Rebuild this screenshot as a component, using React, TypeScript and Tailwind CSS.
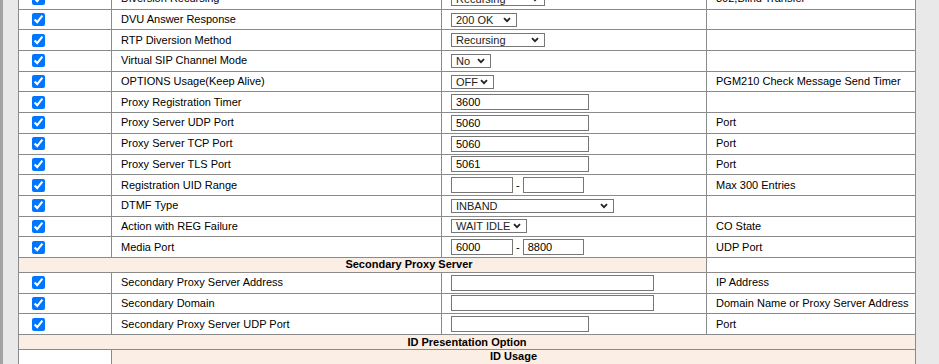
import React from 'react';

type Field =
  | { kind: 'select'; value: string; width: number }
  | { kind: 'input'; value: string; width: number }
  | { kind: 'range'; from: string; to: string };

type Row = { label: string; field: Field; note?: string };

const Chevron = () => (
  <svg width="8" height="6" viewBox="0 0 8 6" className="shrink-0">
    <path d="M1 1.2 L4 4.2 L7 1.2" fill="none" stroke="#222" strokeWidth="1.8" />
  </svg>
);

const Select = ({ value, width }: { value: string; width: number }) => (
  <div
    className="flex h-[14px] items-center justify-between whitespace-nowrap border border-[#767676] bg-white pl-[4px] pr-[5px] text-[11px] leading-[12px] text-[#222]"
    style={{ width }}
  >
    <span>{value}</span>
    <Chevron />
  </div>
);

const TextBox = ({ value, width }: { value: string; width: number }) => (
  <div
    className="flex h-[16px] items-center border border-[#767676] bg-white pl-[4px] text-[11px] leading-[12px] text-black"
    style={{ width }}
  >
    {value}
  </div>
);

const FieldCell = ({ field }: { field: Field }) => {
  if (field.kind === 'select') return <Select value={field.value} width={field.width} />;
  if (field.kind === 'input') return <TextBox value={field.value} width={field.width} />;
  return (
    <div className="flex items-center">
      <TextBox value={field.from} width={62} />
      <span className="mx-[3px] text-[11px]">-</span>
      <TextBox value={field.to} width={61} />
    </div>
  );
};

const primary: Row[] = [
  { label: 'Diversion Recursing', field: { kind: 'select', value: 'Recursing', width: 94 }, note: '302,Blind Transfer' },
  { label: 'DVU Answer Response', field: { kind: 'select', value: '200 OK', width: 66 } },
  { label: 'RTP Diversion Method', field: { kind: 'select', value: 'Recursing', width: 94 } },
  { label: 'Virtual SIP Channel Mode', field: { kind: 'select', value: 'No', width: 40 } },
  { label: 'OPTIONS Usage(Keep Alive)', field: { kind: 'select', value: 'OFF', width: 43 }, note: 'PGM210 Check Message Send Timer' },
  { label: 'Proxy Registration Timer', field: { kind: 'input', value: '3600', width: 138 } },
  { label: 'Proxy Server UDP Port', field: { kind: 'input', value: '5060', width: 138 }, note: 'Port' },
  { label: 'Proxy Server TCP Port', field: { kind: 'input', value: '5060', width: 138 }, note: 'Port' },
  { label: 'Proxy Server TLS Port', field: { kind: 'input', value: '5061', width: 138 }, note: 'Port' },
  { label: 'Registration UID Range', field: { kind: 'range', from: '', to: '' }, note: 'Max 300 Entries' },
  { label: 'DTMF Type', field: { kind: 'select', value: 'INBAND', width: 163 } },
  { label: 'Action with REG Failure', field: { kind: 'select', value: 'WAIT IDLE', width: 76 }, note: 'CO State' },
  { label: 'Media Port', field: { kind: 'range', from: '6000', to: '8800' }, note: 'UDP Port' },
];

const secondary: Row[] = [
  { label: 'Secondary Proxy Server Address', field: { kind: 'input', value: '', width: 203 }, note: 'IP Address' },
  { label: 'Secondary Domain', field: { kind: 'input', value: '', width: 203 }, note: 'Domain Name or Proxy Server Address' },
  { label: 'Secondary Proxy Server UDP Port', field: { kind: 'input', value: '', width: 138 }, note: 'Port' },
];

const cell = 'border border-[#8a8a8a] px-[9px] py-0 align-middle whitespace-nowrap';

const SettingRow = ({ row }: { row: Row }) => (
  <tr className="h-[20.7px]">
    <td className={cell}>
      <input type="checkbox" defaultChecked className="m-0 ml-[4px] block h-[13px] w-[13px]" />
    </td>
    <td className={cell}>{row.label}</td>
    <td className={cell}>
      <FieldCell field={row.field} />
    </td>
    <td className={cell}>{row.note ?? ''}</td>
  </tr>
);

export default function App() {
  return (
    <div
      className="flex h-[364px] w-[939px] overflow-hidden bg-[#e9e9e9]"
      style={{ fontFamily: '"Liberation Sans", Arial, sans-serif' }}
    >
      <div className="w-[3px] shrink-0 bg-[#a3a3a3]" />
      <div className="w-[15px] shrink-0" />
      <div className="shrink-0">
        <table className="-mt-[12px] w-[897px] table-fixed border-collapse bg-white text-[11px] leading-[13px] text-black">
          <colgroup>
            <col className="w-[93px]" />
            <col className="w-[330px]" />
            <col className="w-[265px]" />
            <col className="w-[209px]" />
          </colgroup>
          <tbody>
            {primary.map((r) => (
              <SettingRow key={r.label} row={r} />
            ))}
            <tr className="h-[15px]">
              <td colSpan={3} className="border border-[#8a8a8a] bg-[#fbeee5] p-0 pl-[93px] text-center font-bold">
                Secondary Proxy Server
              </td>
              <td className={cell}></td>
            </tr>
            {secondary.map((r) => (
              <SettingRow key={r.label} row={r} />
            ))}
            <tr className="h-[15px]">
              <td colSpan={4} className="border border-[#8a8a8a] bg-[#fbeee5] p-0 text-center font-bold">
                ID Presentation Option
              </td>
            </tr>
            <tr className="h-[20px]">
              <td className={cell}></td>
              <td colSpan={3} className="border border-[#8a8a8a] bg-[#fbeee5] p-0 align-top text-center font-bold">
                ID Usage
              </td>
            </tr>
          </tbody>
        </table>
      </div>
    </div>
  );
}
